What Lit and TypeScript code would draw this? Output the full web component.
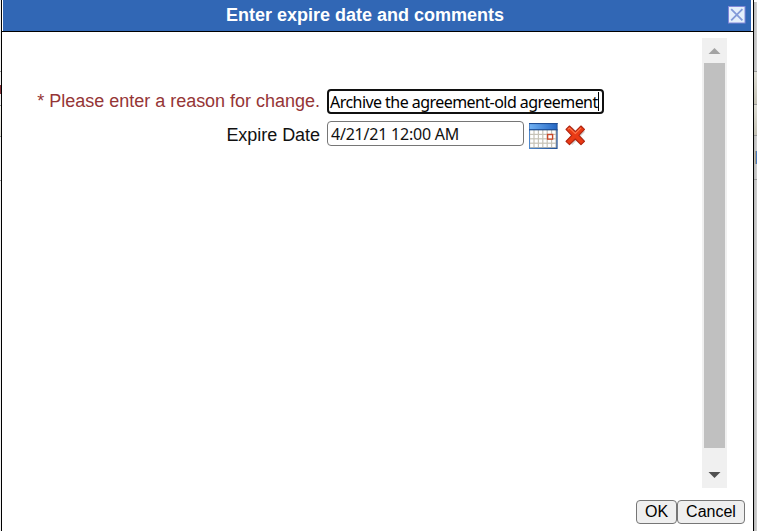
import { LitElement, html, css, svg } from "lit";
import { customElement } from "lit/decorators.js";

@customElement("calendar-icon")
class CalendarIcon extends LitElement {
  static styles = css`
    :host { display: block; width: 29px; height: 26px; }
    svg { display: block; }
  `;
  render() {
    const cols = [0, 1, 2, 3, 4, 5];
    const rows = [0, 1, 2, 3];
    return html`<svg width="29" height="26" viewBox="0 0 29 26">
      <defs>
        <linearGradient id="bar" x1="0" x2="1" y1="0" y2="0">
          <stop offset="0" stop-color="#6fb0f2" />
          <stop offset="1" stop-color="#2668c4" />
        </linearGradient>
        <linearGradient id="frame" x1="0" x2="1" y1="0" y2="0">
          <stop offset="0" stop-color="#4f88cc" />
          <stop offset="1" stop-color="#1f4f96" />
        </linearGradient>
      </defs>
      <rect x="0" y="0" width="28.6" height="26" fill="url(#frame)" />
      <rect x="0" y="0" width="28.6" height="1" fill="#1f4f96" />
      <rect x="1" y="1.2" width="26.6" height="5" fill="url(#bar)" />
      <rect x="0" y="6.2" width="28.6" height="1.2" fill="#1f4f96" />
      <rect x="1" y="7.4" width="26.4" height="17.4" fill="#c6c2b6" />
      ${rows.map((r) =>
        cols.map(
          (c) => svg`<rect x=${1.2 + c * 4.4} y=${7.6 + r * 4.4} width="3.2" height="3.2" fill="#fff" />`
        )
      )}
      <rect x="18.6" y="11.5" width="5" height="4.6" fill="#fff" stroke="#c8482a" stroke-width="1.4" />
    </svg>`;
  }
}

@customElement("clear-icon")
class ClearIcon extends LitElement {
  static styles = css`
    :host { display: block; width: 23px; height: 23px; }
    svg { display: block; }
  `;
  render() {
    return html`<svg width="23" height="23" viewBox="0 0 23 23">
      <path d="M5 4.5 17.7 17.7M17.7 4.5 5 17.7" stroke="#a9a9a9" stroke-opacity=".5" stroke-width="6.4" />
      <path d="M1 4.4 4.5 1 10.3 6.7 16 1 19.5 4.4 13.9 10.3 19.5 16.3 16 19.7 10.3 14 4.5 19.7 1 16.3 6.7 10.3Z"
        fill="#ea3a14" stroke="#b02510" stroke-width="1.1" stroke-linejoin="round" />
      <path d="M2.8 4.4 4.5 2.9 10.3 8.6 16 2.9" fill="none" stroke="#ff7b4e" stroke-width="1.1" />
    </svg>`;
  }
}

@customElement("app-root")
class AppRoot extends LitElement {
  static styles = css`
    :host {
      display: flex;
      width: 757px;
      height: 531px;
      overflow: hidden;
      background: #fff;
      font-family: "Liberation Sans", Arial, sans-serif;
      font-size: 18px;
      color: #111;
    }
    * { box-sizing: border-box; }
    .edge { display: flex; flex-direction: column; flex: none; }
    .edge.left { width: 1px; background: #f0f0f0; }
    .edge.right {
      width: 3px;
      background: linear-gradient(#fff, #fff) 0 0 / 3px 2px no-repeat, linear-gradient(90deg, #b9b9b9, #d2d2d2);
    }
    .gap71 { height: 71px; }
    .gap11 { height: 11px; }
    .gap13 { height: 13px; }
    .gap15 { height: 15px; }
    .gap43 { height: 43px; }
    .line { height: 1px; background: #999; }
    .mark { height: 9px; background: #84343a; }
    .tan { height: 30px; background: linear-gradient(#dddcd4, #c4c1b4); }
    .tall { height: 32px; }
    .pale { height: 30px; background: linear-gradient(#f4f4f0, #dddcd4); }
    .blue { height: 13px; margin-left: 1px; background: linear-gradient(90deg, #a69a82 0 1px, #4a7cc0 1px); }
    .dialog {
      flex: none;
      width: 753px;
      height: 531px;
      border: solid #000;
      border-width: 0 1px;
      display: flex;
      flex-direction: column;
    }
    .header {
      flex: none;
      height: 32px;
      border-bottom: 1px solid #000;
      padding: 0 1px;
    }
    .bar {
      height: 31px;
      margin-right: 1px;
      background: #3167b5;
      display: flex;
      align-items: center;
      justify-content: space-between;
      padding: 0 5px 1px 223px;
      color: #fff;
      font-weight: bold;
      white-space: nowrap;
    }
    .close { display: block; flex: none; }
    .body { display: flex; justify-content: space-between; height: 456px; padding: 6px 26px 0 0; }
    .form { width: 620px; padding-top: 51px; }
    .row { display: flex; align-items: flex-start; white-space: nowrap; }
    .row + .row { margin-top: 7px; }
    .label {
      width: 318px;
      height: 25px;
      line-height: 25px;
      text-align: right;
      letter-spacing: -0.015px;
    }
    .label.required { color: #953536; line-height: 24px; }
    .label.date { line-height: 28px; letter-spacing: -0.04px; }
    .field {
      margin-left: 7px;
      height: 25px;
      display: flex;
      align-items: center;
      font-family: "Noto Sans", sans-serif;
      font-size: 16px;
      border-radius: 4px;
      background: #fff;
    }
    .field.reason { width: 277px; border: 2px solid #101010; padding-left: 1px; letter-spacing: -0.55px; color: #000; }
    .field.when { width: 197px; border: 1px solid #767676; padding-left: 3px; letter-spacing: -0.22px; }
    .caret { width: 1px; height: 19px; background: #000; }
    calendar-icon { margin: 2px 0 0 5px; }
    clear-icon { margin: 4px 0 0 7px; }
    .scroll {
      width: 25px;
      height: 450px;
      background: #f0f0f0;
      display: flex;
      flex-direction: column;
      align-items: center;
    }
    .scroll svg { display: block; flex: none; }
    .thumb { width: 21px; height: 385px; background: #c0c0c0; }
    .actions { display: flex; justify-content: flex-end; padding: 12px 8px 0 0; }
    .button {
      height: 24px;
      border: 1px solid #767676;
      border-radius: 4px;
      background: #efefef;
      font-size: 16px;
      line-height: 21px;
      text-align: center;
      color: #000;
    }
    .ok { width: 41px; }
    .cancel { width: 68px; }
  `;

  render() {
    return html`
      <div class="edge left">
        <div class="gap71"></div>
        <div class="line"></div>
        <div class="gap13"></div>
        <div class="mark"></div>
        <div class="gap11"></div>
        <div class="line"></div>
        <div class="pale"></div>
        <div class="line"></div>
        <div class="gap43"></div>
        <div class="line"></div>
      </div>
      <div class="dialog">
        <div class="header">
          <div class="bar">
            <span>Enter expire date and comments</span>
            <svg class="close" width="18" height="18" viewBox="0 0 18 18">
              <rect x=".5" y=".5" width="16.5" height="16.5" fill="#e4effb" stroke="#8288d8" />
              <path d="M3.2 3.2 14.4 14.4M14.4 3.2 3.2 14.4" stroke="#829ad8" stroke-width="1.8" />
            </svg>
          </div>
        </div>
        <div class="body">
          <div class="form">
            <div class="row">
              <div class="label required">* Please enter a reason for change.</div>
              <div class="field reason"><span>Archive the agreement-old agreement</span><span class="caret"></span></div>
            </div>
            <div class="row">
              <div class="label date">Expire Date</div>
              <div class="field when"><span>4/21/21 12:00 AM</span></div>
              <calendar-icon></calendar-icon>
              <clear-icon></clear-icon>
            </div>
          </div>
          <div class="scroll">
            <svg width="25" height="25"><path d="M6.5 16 12.5 10 18.5 16Z" fill="#a3a3a3" /></svg>
            <div class="thumb"></div>
            <svg width="25" height="40"><path d="M6.5 24 12.5 30 18.5 24Z" fill="#505050" /></svg>
          </div>
        </div>
        <div class="actions">
          <div class="button ok">OK</div>
          <div class="button cancel">Cancel</div>
        </div>
      </div>
      <div class="edge right">
        <div class="gap71"></div>
        <div class="line"></div>
        <div class="tan tall"></div>
        <div class="line"></div>
        <div class="tan"></div>
        <div class="line"></div>
        <div class="gap15"></div>
        <div class="blue"></div>
        <div class="gap15"></div>
        <div class="line"></div>
      </div>
    `;
  }
}
